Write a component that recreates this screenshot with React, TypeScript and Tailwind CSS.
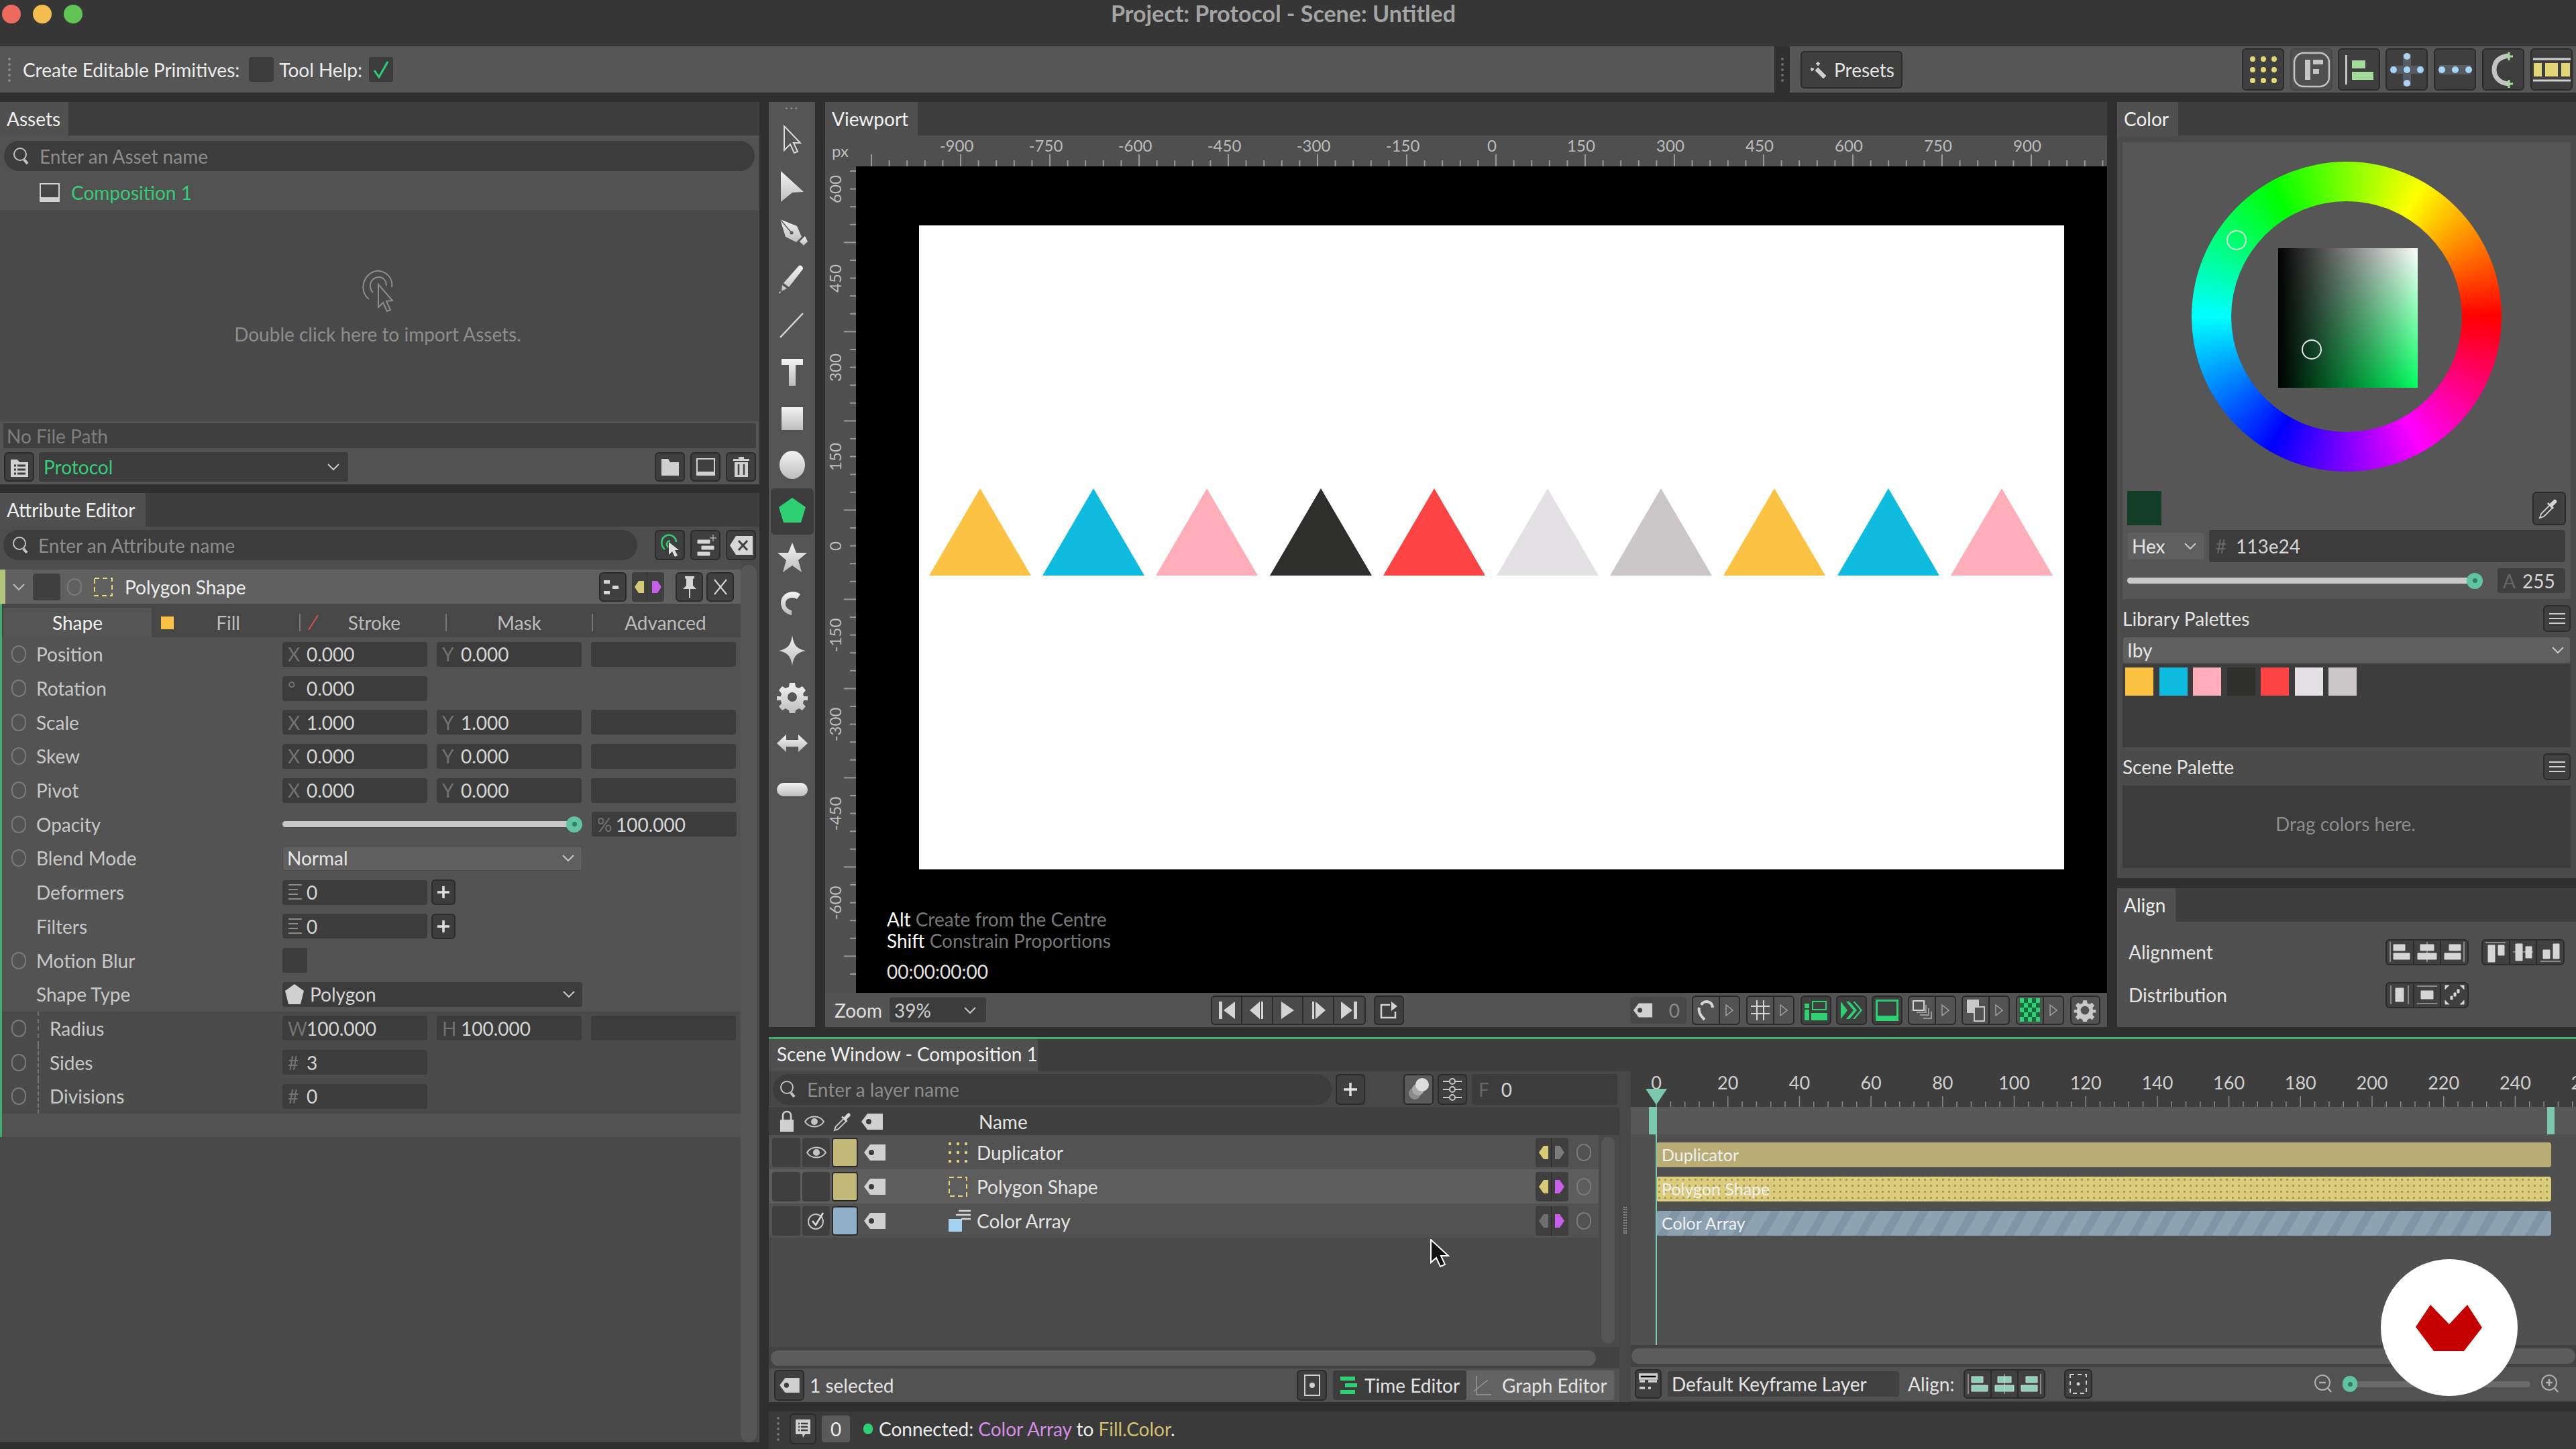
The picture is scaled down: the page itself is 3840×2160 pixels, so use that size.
import type { ReactNode } from 'react';

const G = '#2fcf74';

function Search() {
  return (
    <svg width="28" height="30" viewBox="0 0 28 30" className="shrink-0">
      <circle cx="12" cy="12" r="9" fill="none" stroke="#c4c4c4" strokeWidth="2" />
      <path d="M18 20l5 6" stroke="#c4c4c4" strokeWidth="4" />
    </svg>
  );
}

function Chevron({ c = '#c8c8c8' }: { c?: string }) {
  return (
    <svg width="20" height="12" viewBox="0 0 20 12" className="shrink-0">
      <path d="M2 2l8 8 8-8" fill="none" stroke={c} strokeWidth="2" />
    </svg>
  );
}

function Tag({ w = 34, h = 26 }: { w?: number; h?: number }) {
  return (
    <svg width={w} height={h} viewBox="0 0 34 26" className="shrink-0">
      <path d="M1 13L10 1h23v24H10z" fill="#d0d0d0" />
      <circle cx="12" cy="13" r="4" fill="#3c3c3c" />
    </svg>
  );
}

function Btn({ className = 'w-[45px] h-[45px]', children }: { className?: string; children?: ReactNode }) {
  return (
    <div className={`${className} flex items-center justify-center shrink-0 rounded-md border-2 border-[#2b2b2b] bg-[#3f3f3f]`}>
      {children}
    </div>
  );
}

function Radio() {
  return <div className="w-[22px] h-[26px] rounded-full border-2 border-[#7a7a7a] shrink-0" />;
}

function Field({ p, v, className = 'w-[216px]' }: { p?: ReactNode; v?: string; className?: string }) {
  return (
    <div className={`${className} h-[37px] shrink-0 rounded bg-[#3c3c3c] flex items-center pl-[8px] text-[#d6d6d6]`}>
      {p && <span className="w-[28px] shrink-0 text-[#727272]">{p}</span>}
      <span>{v}</span>
    </div>
  );
}

function ListGlyph() {
  return (
    <svg width="24" height="26" viewBox="0 0 24 26">
      <path d="M1 2h20M1 9h14M1 16h14M1 23h20" stroke="#8a8a8a" strokeWidth="2" />
    </svg>
  );
}

function Burger() {
  return (
    <svg width="26" height="20" viewBox="0 0 26 20">
      <path d="M1 3h24M1 10h24M1 17h24" stroke="#d0d0d0" strokeWidth="2" />
    </svg>
  );
}

function PanelTab({ children, className }: { children: ReactNode; className: string }) {
  return (
    <div className="h-[50px] shrink-0 bg-[#3e3e3e]">
      <div className={`${className} h-full flex items-center bg-[#505050] text-[#f0f0f0] pl-[10px]`}>{children}</div>
    </div>
  );
}

const ALIGN_PATHS = [
  'M3 2v30M8 6h17v9H8zM8 19h24v9H8z',
  'M17 2v30M7 6h20v9H7zM3 19h28v9H3z',
  'M31 2v30M9 6h17v9H9zM2 19h24v9H2z',
  'M2 3h30M6 7h10v25H6zM21 7h9v15h-9z',
  'M2 17h30M6 5h10v25H6zM21 9h9v17h-9z',
  'M2 31h30M6 14h10v13H6zM21 5h9v22h-9z',
  'M4 3v28M30 3v28M11 7h12v20H11z',
  'M2 4h30M2 30h30M8 11h18v12H8z',
  'M3 9V3h6M25 3h6v6M3 25v6h6M25 31h6v-6M11 19v5h3v-5zM16 14v5h3v-5zM21 9v5h3v-5z',
];

function AlignGroup({ kinds, className, accent = '#d6d6d6' }: { kinds: number[]; className: string; accent?: string }) {
  return (
    <div className={`${className} flex rounded-md border-2 border-[#2b2b2b] bg-[#2b2b2b] gap-[2px] shrink-0 overflow-hidden`}>
      {kinds.map((k) => (
        <div key={k} className="flex-1 bg-[#404040] flex items-center justify-center">
          <svg width="34" height="34" viewBox="0 0 34 34">
            <path d={ALIGN_PATHS[k]} fill={accent} stroke="#d6d6d6" strokeWidth="1" />
          </svg>
        </div>
      ))}
    </div>
  );
}

function ToolIcon({ i }: { i: number }) {
  const f = 'url(#tool)';
  const shapes: ReactNode[] = [
    <path d="M12 3v36l9-9 6 13 5-2-6-13h10z" fill="none" stroke="#d8d8d8" strokeWidth="2" />,
    <path d="M7 1l34 31-17 1L7 47z" fill={f} />,
    <g>
      <path d="M6 4l25 10 7 16-8 8-16-8z" fill={f} />
      <path d="M6 4l16 19" stroke="#555" strokeWidth="1.5" />
      <circle cx="23" cy="24" r="2.5" fill="#555" />
      <path d="M35 37l8-8 4 8-6 6z" fill={f} />
    </g>,
    <path d="M34 4c2-2 7 2 6 5L19 36l-8-6zM9 33l7 5-8 4zM4 44l2-2 1 2-2 2z" fill={f} />,
    <path d="M6 42L40 6" stroke="#d8d8d8" strokeWidth="2.5" />,
    <path d="M8 4h32v9H29v31H19V13H8z" fill={f} />,
    <rect x="8" y="7" width="32" height="34" fill={f} />,
    <ellipse cx="24" cy="24" rx="19" ry="21" fill={f} />,
    <path d="M24 4l20 14-7 23H11L4 18z" fill={G} />,
    <path d="M24 2l6 15h16l-13 11 5 18-14-10-14 10 5-18L2 17h16z" fill={f} />,
    <path d="M36 10C28 2 8 6 7 22c0 10 6 17 16 19l0-7c-6-2-10-6-9-12 1-7 12-9 17-5z" fill={f} />,
    <path d="M24 1c2 14 6 20 20 23-14 3-18 9-20 23-2-14-6-20-20-23 14-3 18-9 20-23z" fill={f} />,
    <path d="M20 3h8l1 6 5 2 5-3 5 6-4 5 1 4h6v6h-6l-1 5 4 4-5 6-5-3-5 3-1 5h-8l-1-5-5-3-5 3-5-6 4-4-1-5H1v-6h6l1-4-4-5 5-6 5 3 5-2zM24 17a7 7 0 100 14 7 7 0 000-14z" fill={f} fillRule="evenodd" />,
    <path d="M1 24l14-13v8h18v-8l14 13-14 13v-8H15v8z" fill={f} />,
    <rect x="1" y="14" width="46" height="20" rx="10" fill={f} />,
  ];
  return (
    <svg width="48" height="48" viewBox="0 0 48 48">
      {shapes[i]}
    </svg>
  );
}

function Ruler() {
  const labels = [-900, -750, -600, -450, -300, -150, 0, 150, 300, 450, 600, 750, 900];
  const ticks = Array.from({ length: 72 }, (_, k) => k);
  return (
    <svg width="1865" height="46" viewBox="0 0 1865 46" className="block shrink-0">
      {ticks.map((k) => {
        const x = 150 + k * 26.6 - 26.6 * 5 + 6;
        return <path key={k} d={`M${x} ${k % 5 === 0 ? 28 : 37}V46`} stroke="#999" strokeWidth="2" />;
      })}
      {labels.map((v, k) => (
        <text key={v} x={150 + k * 133} y="24" fontSize="24" fill="#bdbdbd" textAnchor="middle" fontFamily="Lato, sans-serif">
          {v}
        </text>
      ))}
    </svg>
  );
}

function VRuler() {
  const labels = [600, 450, 300, 150, 0, -150, -300, -450, -600];
  const ticks = Array.from({ length: 46 }, (_, k) => k);
  return (
    <svg width="46" height="1232" viewBox="0 0 46 1232" className="block shrink-0">
      {ticks.map((k) => (
        <path key={k} d={`M${k % 5 === 4 ? 28 : 37} ${7 + k * 26.6}H46`} stroke="#999" strokeWidth="2" />
      ))}
      {labels.map((v, k) => (
        <text
          key={v}
          transform={`translate(24 ${34 + k * 133}) rotate(-90)`}
          fontSize="24"
          fill="#bdbdbd"
          textAnchor="middle"
          fontFamily="Lato, sans-serif"
        >
          {v}
        </text>
      ))}
    </svg>
  );
}

function TimeRuler() {
  const ticks = Array.from({ length: 70 }, (_, k) => k);
  const labels = Array.from({ length: 14 }, (_, k) => k * 20);
  return (
    <svg width="1410" height="53" viewBox="0 0 1410 53" className="block">
      {ticks.map((k) => (
        <path key={k} d={`M${38 + k * 21.34} ${k % 5 === 0 ? 37 : 45}V53`} stroke="#8a8a8a" strokeWidth="1.5" />
      ))}
      {labels.map((v, k) => (
        <text key={v} x={38 + k * 106.7} y="27" fontSize="27" fill="#d0d0d0" textAnchor="middle" fontFamily="Lato, sans-serif">
          {v}
        </text>
      ))}
    </svg>
  );
}

function AttrRow({ label, radio = true, children }: { label: string; radio?: boolean; children?: ReactNode }) {
  return (
    <div className="h-[50.7px] flex items-center shrink-0">
      <div className="w-[14px] shrink-0" />
      <div className="w-[22px] shrink-0">{radio && <Radio />}</div>
      <div className="w-[382px] pl-[15px] shrink-0 text-[#c8c8c8]">{label}</div>
      <div className="flex items-center gap-[14px]">{children}</div>
    </div>
  );
}

function SubRow({ label, children }: { label: string; children?: ReactNode }) {
  return (
    <div className="h-[50.7px] flex items-center shrink-0">
      <div className="w-[14px] shrink-0" />
      <Radio />
      <div className="w-[382px] h-full shrink-0 ml-[17px] pl-[16px] border-l-2 border-dashed border-[#777] flex items-center text-[#c8c8c8]">
        {label}
      </div>
      <div className="-ml-[17px] flex items-center gap-[14px]">{children}</div>
    </div>
  );
}

function Slider({ className, knob }: { className: string; knob: string }) {
  return (
    <div className={`${className} h-[9px] rounded-full bg-[#c9c9c9] flex items-center justify-end`}>
      <div className={`${knob} rounded-full bg-[#62c3a3] flex items-center justify-center shrink-0`}>
        <div className="w-[7px] h-[7px] rounded-full bg-[#2f7f68]" />
      </div>
    </div>
  );
}

function Plus() {
  return (
    <Btn className="w-[36px] h-[38px] !bg-[#3c3c3c] ml-[-8px]">
      <svg width="20" height="20" viewBox="0 0 20 20">
        <path d="M10 1v18M1 10h18" stroke="#e0e0e0" strokeWidth="3.5" />
      </svg>
    </Btn>
  );
}

function LeftColumn() {
  return (
    <div className="w-[1132px] shrink-0 flex flex-col gap-[13px]">
      <div className="h-[570px] shrink-0 flex flex-col bg-[#494949]">
        <PanelTab className="w-[102px]">Assets</PanelTab>
        <div className="h-[56px] shrink-0 bg-[#525252] pt-[8px] pl-[6px] pr-[7px]">
          <div className="h-[45px] rounded-full bg-[#3c3c3c] flex items-center pl-[12px] gap-[13px] text-[#8d8d8d]">
            <Search />
            Enter an Asset name
          </div>
        </div>
        <div className="h-[55px] shrink-0 bg-[#525252] flex items-center pl-[58px] pt-[2px] gap-[16px] text-[#38cc7a]">
          <svg width="32" height="30" viewBox="0 0 32 30">
            <rect x="1" y="1" width="30" height="28" fill="#d0d0d0" />
            <rect x="3" y="3" width="26" height="19" fill="#454545" />
          </svg>
          Composition 1
        </div>
        <div className="flex-1 flex flex-col items-center justify-start pt-[89px] pr-[6px] text-[#8d8d8d]">
          <svg width="50" height="64" viewBox="0 0 50 64">
            <g fill="none" stroke="#8d8d8d" strokeWidth="2">
              <path d="M12 44C4 38 2 28 4 20 8 6 20 1 28 2c12 2 20 12 18 24" />
              <path d="M18 34c-6-6-6-18 4-22 8-3 16 2 16 12" />
              <path d="M26 22l0 34 7-7 6 13 5-2-6-13 9-1z" fill="#494949" />
            </g>
          </svg>
          <div className="mt-[18px]">Double click here to import Assets.</div>
        </div>
        <div className="shrink-0 h-[94px] bg-[#535353] px-[5px] pt-[3px]">
          <div className="h-[37px] bg-[#3f3f3f] flex items-center pl-[5px] text-[#7e7e7e]">No File Path</div>
          <div className="flex items-center mt-[6px] pl-[1px]">
            <Btn className="w-[45px] h-[44px]">
              <svg width="30" height="32" viewBox="0 0 30 32">
                <path d="M2 5h10l3 4h13v22H2z" fill="#d0d0d0" />
                <path d="M7 14h3M7 20h3M7 26h3M12 14h12M12 20h12M12 26h12" stroke="#3c3c3c" strokeWidth="3" />
              </svg>
            </Btn>
            <div className="ml-[7px] w-[461px] h-[44px] rounded bg-[#3c3c3c] flex items-center justify-between pl-[7px] pr-[12px] text-[#38cc7a]">
              Protocol
              <Chevron />
            </div>
            <div className="ml-auto flex gap-[8px]">
              <Btn className="w-[45px] h-[44px]">
                <svg width="30" height="30" viewBox="0 0 30 30">
                  <path d="M2 3h10l3 5h13v20H2z" fill="#d0d0d0" />
                </svg>
              </Btn>
              <Btn className="w-[45px] h-[44px]">
                <svg width="30" height="30" viewBox="0 0 30 30">
                  <rect x="1" y="2" width="28" height="26" fill="#d0d0d0" />
                  <rect x="3" y="4" width="24" height="18" fill="#3f3f3f" />
                </svg>
              </Btn>
              <Btn className="w-[45px] h-[44px]">
                <svg width="26" height="32" viewBox="0 0 26 32">
                  <path d="M9 1h8v3h8v3H1V4h8zM3 9h20v22H3z" fill="#d0d0d0" />
                  <path d="M9 12v16M17 12v16" stroke="#3f3f3f" strokeWidth="2.5" />
                </svg>
              </Btn>
            </div>
          </div>
        </div>
      </div>

      <div className="flex-1 flex flex-col bg-[#494949] min-h-0">
        <PanelTab className="w-[217px]">Attribute Editor</PanelTab>
        <div className="flex-1 flex min-h-0">
          <div className="w-[1104px] shrink-0 flex flex-col">
            <div className="h-[64px] shrink-0 flex items-start pt-[5px] pl-[5px] bg-[#4d4d4d]">
              <div className="w-[945px] h-[45px] shrink-0 rounded-full bg-[#3c3c3c] flex items-center pl-[12px] gap-[12px] text-[#8d8d8d]">
                <Search />
                Enter an Attribute name
              </div>
              <div className="ml-[26px] flex gap-[8px] shrink-0 z-10">
                <Btn>
                  <svg width="34" height="36" viewBox="0 0 34 36">
                    <path d="M9 24C2 18 3 6 12 3c8-2 14 4 14 10" fill="none" stroke={G} strokeWidth="2.5" />
                    <path d="M14 21c-3-3-3-9 3-10" fill="none" stroke={G} strokeWidth="2.5" />
                    <path d="M15 13v19l5-5 4 8 4-2-4-8h6z" fill="#e0e0e0" />
                  </svg>
                </Btn>
                <Btn>
                  <svg width="32" height="34" viewBox="0 0 32 34">
                    <path d="M4 9h18v5H4zM10 18h18v5H10zM4 27h18v5H4zM27 1v10M22 6h10" fill="#d6d6d6" stroke="#d6d6d6" strokeWidth="1" />
                  </svg>
                </Btn>
                <Btn>
                  <svg width="36" height="32" viewBox="0 0 36 32">
                    <path d="M1 16L10 2h25v28H10z" fill="#d6d6d6" />
                    <path d="M14 9l13 14M27 9L14 23" stroke="#3f3f3f" strokeWidth="3" />
                  </svg>
                </Btn>
              </div>
            </div>
            <div className="h-[51px] shrink-0 bg-[#606060] border-l-[8px] border-[#b4c47a] flex items-center text-[#ececec]">
              <div className="ml-[10px]">
                <Chevron c="#bdbdbd" />
              </div>
              <div className="ml-[11px] w-[41px] h-[40px] rounded bg-[#3f3f3f]" />
              <div className="ml-[10px]">
                <Radio />
              </div>
              <svg width="30" height="30" viewBox="0 0 30 30" className="ml-[17px]">
                <rect x="2" y="2" width="26" height="26" fill="none" stroke="#e4d678" strokeWidth="2" strokeDasharray="7 5" />
              </svg>
              <span className="ml-[17px]">Polygon Shape</span>
              <div className="ml-auto flex items-center mr-[10px]">
                <Btn className="w-[41px] h-[44px]">
                  <svg width="30" height="26" viewBox="0 0 30 26">
                    <path d="M1 3h9v5H1zM1 19h9v5H1zM14 11h9v5h-9zM10 13h4" fill="#d6d6d6" />
                  </svg>
                </Btn>
                <div className="ml-[8px] w-[48px] h-[44px] rounded bg-[#3f3f3f] flex items-center justify-center gap-[2px]">
                  <div className="w-[23px] h-full flex items-center justify-center border-r border-[#2b2b2b]">
                    <svg width="14" height="20" viewBox="0 0 14 20">
                      <path d="M14 1H6L0 10l6 9h8z" fill="#d6c978" />
                    </svg>
                  </div>
                  <div className="w-[23px] h-full flex items-center justify-center">
                    <svg width="14" height="20" viewBox="0 0 14 20">
                      <path d="M0 1h8l6 9-6 9H0z" fill="#c85fe8" />
                    </svg>
                  </div>
                </div>
                <Btn className="ml-[17px] w-[41px] h-[44px]">
                  <svg width="22" height="34" viewBox="0 0 22 34">
                    <path d="M4 1h14v3l-2 1v10l5 5H1l5-5V5L4 4zM10 20h2v13h-2z" fill="#d6d6d6" />
                  </svg>
                </Btn>
                <Btn className="ml-[5px] w-[41px] h-[44px]">
                  <svg width="22" height="26" viewBox="0 0 22 26">
                    <path d="M2 2l18 22M20 2L2 24" stroke="#d6d6d6" strokeWidth="2" />
                  </svg>
                </Btn>
              </div>
            </div>
            <div className="flex-1 bg-[#535353] border-l-[3px] border-[#3fae6c] flex flex-col max-h-[795px]">
              <div className="h-[50px] shrink-0 flex items-end bg-[#474747] pt-[6px] text-[#bdbdbd]">
                <div className="w-[221px] ml-[2px] h-[44px] bg-[#555555] flex items-center justify-center text-[#f0f0f0]">Shape</div>
                <div className="h-[44px] flex-1 flex items-center">
                  <div className="ml-[14px] w-[19px] h-[19px] bg-[#fcc244] shrink-0" />
                  <div className="w-[162px] mr-[25px] text-center">Fill</div>
                  <div className="w-[2px] h-[26px] bg-[#777] shrink-0" />
                  <svg width="20" height="26" viewBox="0 0 20 26" className="ml-[10px] shrink-0">
                    <path d="M2 24L16 2" stroke="#d85050" strokeWidth="2" />
                  </svg>
                  <div className="w-[160px] mr-[26px] text-center">Stroke</div>
                  <div className="w-[2px] h-[26px] bg-[#777] shrink-0" />
                  <div className="w-[216px] text-center">Mask</div>
                  <div className="w-[2px] h-[26px] bg-[#777] shrink-0" />
                  <div className="w-[216px] text-center">Advanced</div>
                </div>
              </div>
              <AttrRow label="Position">
                <Field p="X" v="0.000" />
                <Field p="Y" v="0.000" />
                <Field />
              </AttrRow>
              <AttrRow label="Rotation">
                <Field p="°" v="0.000" />
              </AttrRow>
              <AttrRow label="Scale">
                <Field p="X" v="1.000" />
                <Field p="Y" v="1.000" />
                <Field />
              </AttrRow>
              <AttrRow label="Skew">
                <Field p="X" v="0.000" />
                <Field p="Y" v="0.000" />
                <Field />
              </AttrRow>
              <AttrRow label="Pivot">
                <Field p="X" v="0.000" />
                <Field p="Y" v="0.000" />
                <Field />
              </AttrRow>
              <AttrRow label="Opacity">
                <Slider className="w-[447px]" knob="w-[24px] h-[24px]" />
                <Field p="%" v="100.000" />
              </AttrRow>
              <AttrRow label="Blend Mode">
                <div className="w-[447px] h-[37px] rounded bg-[#5f5f5f] border border-[#4a4a4a] flex items-center justify-between pl-[6px] pr-[10px] text-[#e6e6e6]">
                  Normal
                  <Chevron />
                </div>
              </AttrRow>
              <AttrRow label="Deformers" radio={false}>
                <Field p={<ListGlyph />} v="0" />
                <Plus />
              </AttrRow>
              <AttrRow label="Filters" radio={false}>
                <Field p={<ListGlyph />} v="0" />
                <Plus />
              </AttrRow>
              <AttrRow label="Motion Blur">
                <div className="w-[37px] h-[37px] rounded bg-[#3c3c3c]" />
              </AttrRow>
              <AttrRow label="Shape Type" radio={false}>
                <div className="w-[447px] h-[37px] rounded bg-[#3c3c3c] flex items-center pl-[3px] pr-[10px] text-[#d6d6d6]">
                  <svg width="30" height="32" viewBox="0 0 30 32">
                    <path d="M15 1l14 10-5 20H6L1 11z" fill="#d0d0d0" />
                  </svg>
                  <span className="ml-[8px]">Polygon</span>
                  <div className="ml-auto">
                    <Chevron />
                  </div>
                </div>
              </AttrRow>
              <div className="bg-[#4b4b4b] flex flex-col shrink-0">
                <SubRow label="Radius">
                  <Field p="W" v="100.000" />
                  <Field p="H" v="100.000" />
                  <Field />
                </SubRow>
                <SubRow label="Sides">
                  <Field p="#" v="3" />
                </SubRow>
                <SubRow label="Divisions">
                  <Field p="#" v="0" />
                </SubRow>
              </div>
            </div>
          </div>
          <div className="w-[24px] shrink-0 bg-[#565656] mt-[57px] rounded-full" />
        </div>
      </div>
    </div>
  );
}

function ToolColumn() {
  return (
    <div className="w-[69px] shrink-0 bg-[#555555] flex flex-col items-center">
      <div className="h-[22px] w-full shrink-0 text-center text-[#8a8a8a] leading-[14px] text-[20px] tracking-[2px]">···</div>
      {Array.from({ length: 15 }, (_, i) => (
        <div
          key={i}
          className={
            i === 8
              ? 'h-[69.2px] w-[64px] shrink-0 flex items-center justify-center rounded-md bg-[#3c3c3c]'
              : 'h-[69.2px] w-[64px] shrink-0 flex items-center justify-center'
          }
        >
          <ToolIcon i={i} />
        </div>
      ))}
    </div>
  );
}

const TRIANGLES = ['#fcc244', '#10bbe0', '#ffadb9', '#2e2e2c', '#fd4444', '#e3e1e3', '#cbc6c8', '#fcc244', '#10bbe0', '#ffadb9'];

function Triangle({ color }: { color: string }) {
  return (
    <svg width="152" height="130" viewBox="0 0 152 130" className="shrink-0">
      <path d="M76 0l76 130H0z" fill={color} />
    </svg>
  );
}

function ChevBtn({ children }: { children: ReactNode }) {
  return (
    <div className="w-[72px] h-[44px] rounded-md border-2 border-[#2b2b2b] bg-[#525252] flex items-center shrink-0">
      <div className="w-[40px] h-full flex items-center justify-center border-r-2 border-[#2b2b2b]">{children}</div>
      <svg width="12" height="18" viewBox="0 0 12 18" className="ml-[8px]">
        <path d="M1 1l10 8-10 8z" fill="none" stroke="#a0a0a0" strokeWidth="1.5" />
      </svg>
    </div>
  );
}

function Transport({ d }: { d: string }) {
  return (
    <div className="w-[46px] h-full flex items-center justify-center border-r-2 border-[#2b2b2b] last:border-r-0">
      <svg width="28" height="30" viewBox="0 0 28 30">
        <path d={d} fill="#d4d4d4" />
      </svg>
    </div>
  );
}

function Viewport() {
  return (
    <div className="w-[1911px] shrink-0 ml-[15px] flex flex-col bg-[#505050]">
      <PanelTab className="w-[138px]">Viewport</PanelTab>
      <div className="h-[46px] shrink-0 flex bg-[#4f4f4f]">
        <div className="w-[46px] pl-[10px] text-[24px] leading-[46px] text-[#bdbdbd]">px</div>
        <Ruler />
      </div>
      <div className="h-[1232px] shrink-0 flex">
        <VRuler />
        <div className="flex-1 bg-black pt-[88px] pl-[94px]">
          <div className="w-[1707px] h-[960px] bg-white flex items-start pt-[392px] pl-[15px] gap-[17.2px]">
            {TRIANGLES.map((c, i) => (
              <Triangle key={i} color={c} />
            ))}
          </div>
          <div className="mt-[58px] ml-[-48px] text-[28px] leading-[32px] text-[#777]">
            <div>
              <span className="text-white">Alt</span> Create from the Centre
            </div>
            <div>
              <span className="text-white">Shift</span> Constrain Proportions
            </div>
            <div className="mt-[14px] text-[#e4e4e4]">00:00:00:00</div>
          </div>
        </div>
      </div>
      <div className="flex-1 flex items-center bg-[#535353] text-[#e0e0e0]">
        <span className="ml-[14px]">Zoom</span>
        <div className="ml-[11px] w-[144px] h-[37px] rounded bg-[#3c3c3c] flex items-center justify-between pl-[7px] pr-[14px] text-[#cfcfcf]">
          39%
          <Chevron />
        </div>
        <div className="ml-[335px] w-[231px] h-[44px] rounded-md border-2 border-[#2b2b2b] bg-[#4a4a4a] flex items-center">
          <Transport d="M2 2h5v26H2zM26 2v26L9 15z" />
          <Transport d="M3 15L18 2v26zM20 2h3v26h-3z" />
          <Transport d="M5 2v26l19-13z" />
          <Transport d="M5 2h3v26H5zM10 2l15 13-15 13z" />
          <Transport d="M21 2h5v26h-5zM2 2v26l17-13z" />
        </div>
        <Btn className="ml-[12px] w-[45px] h-[44px]">
          <svg width="28" height="28" viewBox="0 0 28 28">
            <path d="M16 6H3v19h21v-9" fill="none" stroke="#d4d4d4" strokeWidth="2.5" />
            <path d="M18 1l9 7-9 7z" fill="#d4d4d4" />
          </svg>
        </Btn>
        <div className="ml-[337px] w-[84px] h-[40px] rounded-md bg-[#474747] flex items-center justify-between pl-[4px] pr-[10px] text-[#8a8a8a]">
          <Tag w={30} h={24} />0
        </div>
        <div className="ml-[8px]">
          <ChevBtn>
            <svg width="26" height="32" viewBox="0 0 26 32">
              <path d="M6 8C10 0 22 2 23 12M3 12c-2 8 4 14 8 18" fill="none" stroke="#d6d6d6" strokeWidth="4" />
            </svg>
          </ChevBtn>
        </div>
        <div className="ml-[9px]">
          <ChevBtn>
            <svg width="30" height="32" viewBox="0 0 30 32">
              <path d="M10 1v30M20 1v30M1 10h28M1 21h28" stroke="#d6d6d6" strokeWidth="2" />
            </svg>
          </ChevBtn>
        </div>
        <Btn className="ml-[9px] w-[46px] h-[44px]">
          <svg width="36" height="32" viewBox="0 0 36 32">
            <path d="M1 6h7v7H1zM1 15h7v16H1zM11 20h24v11H11z" fill={G} />
            <rect x="13" y="3" width="20" height="12" fill="none" stroke={G} strokeWidth="2" />
          </svg>
        </Btn>
        <Btn className="ml-[7px] w-[46px] h-[44px]">
          <svg width="34" height="30" viewBox="0 0 34 30">
            <path d="M1 2l10 13L1 28zM9 2l11 13L9 28h5l11-13L14 2zM19 2l11 13-11 13h3l11-13L22 2z" fill={G} />
          </svg>
        </Btn>
        <Btn className="ml-[7px] w-[46px] h-[44px]">
          <svg width="36" height="34" viewBox="0 0 36 34">
            <rect x="1" y="1" width="34" height="32" fill={G} />
            <rect x="4" y="4" width="28" height="21" fill="#3f3f3f" />
          </svg>
        </Btn>
        <div className="ml-[8px]">
          <ChevBtn>
            <svg width="30" height="32" viewBox="0 0 30 32">
              <rect x="2" y="2" width="16" height="14" fill="none" stroke="#d6d6d6" strokeWidth="2" />
              <path d="M21 8v11H7M25 13v10H12M29 18v10H17" fill="none" stroke="#999" strokeWidth="2" />
            </svg>
          </ChevBtn>
        </div>
        <div className="ml-[8px]">
          <ChevBtn>
            <svg width="30" height="34" viewBox="0 0 30 34">
              <rect x="2" y="1" width="18" height="20" fill="#c8c8c8" />
              <rect x="13" y="12" width="15" height="21" fill="#525252" stroke="#c8c8c8" strokeWidth="2" />
            </svg>
          </ChevBtn>
        </div>
        <div className="ml-[9px]">
          <ChevBtn>
            <svg width="30" height="35" viewBox="0 0 30 35">
              {Array.from({ length: 25 }, (_, k) => (
                <rect
                  key={k}
                  x={(k % 5) * 6}
                  y={Math.floor(k / 5) * 7}
                  width="6"
                  height="7"
                  fill={((k % 5) + Math.floor(k / 5)) % 2 === 0 ? G : '#1c6b3f'}
                />
              ))}
            </svg>
          </ChevBtn>
        </div>
        <Btn className="ml-[9px] w-[45px] h-[44px] !bg-[#525252]">
          <svg width="34" height="34" viewBox="0 0 48 48">
            <path d="M20 3h8l1 6 5 2 5-3 5 6-4 5 1 4h6v6h-6l-1 5 4 4-5 6-5-3-5 3-1 5h-8l-1-5-5-3-5 3-5-6 4-4-1-5H1v-6h6l1-4-4-5 5-6 5 3 5-2zM24 15a9 9 0 100 18 9 9 0 000-18z" fill="#c8c8c8" fillRule="evenodd" />
          </svg>
        </Btn>
      </div>
    </div>
  );
}

const PALETTE = ['#fcc244', '#10bbe0', '#ffadb9', '#2f2f2d', '#fd4444', '#e3e1e3', '#cbc6c8'];

function RightColumn() {
  return (
    <div className="flex-1 ml-[15px] flex flex-col min-w-0">
      <div className="h-[1157px] shrink-0 bg-[#4b4b4b] flex flex-col">
        <PanelTab className="w-[91px]">Color</PanelTab>
        <div className="mx-[8px] mt-[10px] h-[681px] shrink-0 bg-[#565656] pt-[29px] flex flex-col">
          <div className="relative w-[462px] h-[462px] mx-auto rounded-full bg-[conic-gradient(from_90deg,#f00,#f0f,#00f,#0ff,#0f0,#ff0,#f00)]">
            <div className="absolute left-[59px] top-[59px] w-[344px] h-[344px] rounded-full bg-[#565656]" />
            <div className="absolute left-[129px] top-[129px] w-[208px] h-[208px] bg-[linear-gradient(to_right,#000,transparent),linear-gradient(to_bottom,#fff,#00ff5f)]" />
            <div className="absolute left-[52px] top-[102px] w-[30px] h-[30px] rounded-full border-2 border-[#d6f5dd]" />
            <div className="absolute left-[164px] top-[265px] w-[30px] h-[30px] rounded-full border-2 border-[#e8e8e8]" />
          </div>
          <div className="mt-[29px] px-[7px] flex items-center justify-between">
            <div className="w-[51px] h-[51px] bg-[#113e24]" />
            <Btn className="w-[50px] h-[50px]">
              <svg width="32" height="32" viewBox="0 0 32 32">
                <path d="M2 30l2-6 13-13 4 4L8 28z" fill="none" stroke="#c8c8c8" strokeWidth="2" />
                <path d="M17 9l6-6c2-2 6 2 4 4l-6 6 2 2-2 2-8-8 2-2z" fill="#d6d6d6" />
              </svg>
            </Btn>
          </div>
          <div className="mt-[7px] px-[8px] flex items-center gap-[8px]">
            <div className="w-[113px] h-[40px] rounded bg-[#5f5f5f] flex items-center justify-between pl-[6px] pr-[10px] text-[#e6e6e6]">
              Hex
              <Chevron />
            </div>
            <div className="w-[532px] h-[48px] rounded bg-[#3c3c3c] flex items-center pl-[10px] text-[#d6d6d6] gap-[14px]">
              <span className="text-[#666]">#</span>113e24
            </div>
          </div>
          <div className="mt-[9px] px-[7px] flex items-center">
            <Slider className="w-[530px]" knob="w-[24px] h-[24px]" />
            <div className="ml-[22px] w-[101px] h-[37px] rounded bg-[#3f3f3f] flex items-center pl-[8px] gap-[10px] text-[#d6d6d6]">
              <span className="text-[#666]">A</span>255
            </div>
          </div>
        </div>
        <div className="mx-[8px] h-[57px] shrink-0 flex items-center justify-between text-[#e4e4e4]">
          Library Palettes
          <Btn className="w-[41px] h-[40px]">
            <Burger />
          </Btn>
        </div>
        <div className="mx-[9px] h-[38px] shrink-0 rounded bg-[#5f5f5f] flex items-center justify-between pl-[6px] pr-[8px] text-[#e6e6e6]">
          Iby
          <Chevron />
        </div>
        <div className="mx-[8px] mt-[2px] h-[124px] shrink-0 bg-[#3c3c3c] flex items-start gap-[8.5px] pt-[5px] pl-[4px]">
          {PALETTE.map((c) => (
            <div key={c} className="w-[42px] h-[42px] shrink-0" style={{ backgroundColor: c }} />
          ))}
        </div>
        <div className="mx-[8px] h-[57px] shrink-0 flex items-center justify-between text-[#e4e4e4]">
          Scene Palette
          <Btn className="w-[41px] h-[40px]">
            <Burger />
          </Btn>
        </div>
        <div className="mx-[8px] h-[123px] shrink-0 bg-[#3c3c3c] flex items-center justify-center pb-[10px] pr-[3px] text-[#8d8d8d]">Drag colors here.</div>
      </div>
      <div className="flex-1 mt-[15px] bg-[#505050] flex flex-col">
        <PanelTab className="w-[87px]">Align</PanelTab>
        <div className="flex-1 pl-[17px] text-[#e4e4e4]">
          <div className="h-[38px] mt-[26px] flex items-center">
            <span className="w-[383px]">Alignment</span>
            <AlignGroup kinds={[0, 1, 2]} className="h-[39px] w-[124px]" />
            <AlignGroup kinds={[3, 4, 5]} className="ml-[19px] h-[39px] w-[124px]" />
          </div>
          <div className="h-[38px] mt-[26px] flex items-center">
            <span className="w-[383px]">Distribution</span>
            <AlignGroup kinds={[6, 7, 8]} className="h-[39px] w-[124px]" />
          </div>
        </div>
      </div>
    </div>
  );
}

const LAYERS = [
  { name: 'Duplicator', color: '#c2b878', row: 'bg-[#525252]', eye: 'eye', l: '#d6c978', r: '#7a7a7a' },
  { name: 'Polygon Shape', color: '#c2b878', row: 'bg-[#5d5d5d]', eye: '', l: '#d6c978', r: '#c85fe8' },
  { name: 'Color Array', color: '#8fb0c8', row: 'bg-[#525252]', eye: 'check', l: '#6e6e6e', r: '#c85fe8' },
];

function Eye() {
  return (
    <svg width="30" height="24" viewBox="0 0 30 24">
      <path d="M1 12C7 2 23 2 29 12 23 22 7 22 1 12z" fill="none" stroke="#c4c4c4" strokeWidth="2" />
      <circle cx="15" cy="12" r="5" fill="#c4c4c4" />
    </svg>
  );
}

function LayerIcon({ i }: { i: number }) {
  if (i === 0)
    return (
      <svg width="30" height="32" viewBox="0 0 30 32">
        {[3, 15, 27].flatMap((x) =>
          [3, 16, 29].map((y) => <circle key={`${x}-${y}`} cx={x} cy={y} r="2.2" fill="#e4d678" />),
        )}
      </svg>
    );
  if (i === 1)
    return (
      <svg width="30" height="32" viewBox="0 0 30 32">
        <rect x="2" y="2" width="26" height="28" fill="none" stroke="#e4d678" strokeWidth="2" strokeDasharray="7 5" />
      </svg>
    );
  return (
    <svg width="34" height="34" viewBox="0 0 34 34">
      <path d="M1 14h11l9 0v19H1z" fill="#a6d0f0" />
      <path d="M16 2h18M12 8h22M20 14h14" stroke="#d6d6d6" strokeWidth="2.5" />
    </svg>
  );
}

function LayerRow({ i }: { i: number }) {
  const l = LAYERS[i];
  return (
    <div className={`${l.row} h-[51px] shrink-0 flex items-center pl-[5px] text-[#e4e4e4]`}>
      <div className="w-[42px] h-[44px] rounded bg-[#3f3f3f]" />
      <div className="ml-[3px] w-[41px] h-[44px] rounded bg-[#3f3f3f] flex items-center justify-center">
        {l.eye === 'eye' && <Eye />}
        {l.eye === 'check' && (
          <svg width="26" height="30" viewBox="0 0 26 30">
            <circle cx="12" cy="16" r="11" fill="none" stroke="#c4c4c4" strokeWidth="2" />
            <path d="M7 15l5 6L23 3" fill="none" stroke="#e0e0e0" strokeWidth="2.5" />
          </svg>
        )}
      </div>
      <div className="ml-[3px] w-[39px] h-[44px] rounded border-2 border-[#2b2b2b]" style={{ backgroundColor: l.color }} />
      <div className="ml-[8px]">
        <Tag />
      </div>
      <div className="ml-[92px] w-[43px] shrink-0">
        <LayerIcon i={i} />
      </div>
      <span>{l.name}</span>
      <div className="ml-auto w-[49px] h-[44px] rounded bg-[#3f3f3f] flex items-center">
        <div className="w-[24px] h-full flex items-center justify-center border-r border-[#2b2b2b]">
          <svg width="14" height="22" viewBox="0 0 14 22">
            <path d="M14 1H7L0 11l7 10h7z" fill={l.l} />
          </svg>
        </div>
        <div className="w-[24px] h-full flex items-center justify-center">
          <svg width="14" height="22" viewBox="0 0 14 22">
            <path d="M0 1h7l7 10-7 10H0z" fill={l.r} />
          </svg>
        </div>
      </div>
      <div className="ml-[12px] mr-[11px]">
        <Radio />
      </div>
    </div>
  );
}

function ScenePanel() {
  return (
    <div className="h-[541px] shrink-0 flex flex-col bg-[#3e3e3e] relative">
      <div className="h-[48px] shrink-0 flex">
        <div className="w-[401px] h-full flex items-center pl-[12px] pb-[5px] bg-[#505050] text-[#f0f0f0]">Scene Window - Composition 1</div>
      </div>
      <div className="flex-1 flex min-h-0">
        <div className="w-[1268px] shrink-0 flex flex-col bg-[#4a4a4a]">
          <div className="h-[54px] shrink-0 flex items-center pl-[6px] bg-[#474747]">
            <div className="w-[833px] h-[46px] shrink-0 rounded-full bg-[#3c3c3c] flex items-center pl-[9px] gap-[14px] text-[#8d8d8d]">
              <Search />
              Enter a layer name
            </div>
            <Btn className="ml-[6px] w-[44px] h-[46px]">
              <svg width="22" height="22" viewBox="0 0 22 22">
                <path d="M11 1v20M1 11h20" stroke="#e0e0e0" strokeWidth="3.5" />
              </svg>
            </Btn>
            <Btn className="ml-[57px] w-[45px] h-[46px] !bg-[#5a5a5a]">
              <svg width="32" height="36" viewBox="0 0 32 36">
                <circle cx="10" cy="24" r="9" fill="#8a8a8a" />
                <circle cx="15" cy="18" r="9" fill="#a8a8a8" />
                <circle cx="21" cy="11" r="10" fill="#dcdcdc" />
              </svg>
            </Btn>
            <Btn className="ml-[6px] w-[44px] h-[46px]">
              <svg width="30" height="34" viewBox="0 0 30 34">
                <path d="M1 5h28M1 17h28M1 29h28" stroke="#c8c8c8" strokeWidth="2" />
                <circle cx="15" cy="5" r="4" fill="#3f3f3f" stroke="#c8c8c8" strokeWidth="2" />
                <circle cx="15" cy="17" r="4" fill="#3f3f3f" stroke="#c8c8c8" strokeWidth="2" />
                <circle cx="15" cy="29" r="4" fill="#3f3f3f" stroke="#c8c8c8" strokeWidth="2" />
              </svg>
            </Btn>
            <div className="ml-[7px] w-[217px] h-[46px] rounded bg-[#3c3c3c] flex items-center pl-[10px] gap-[18px] text-[#d6d6d6]">
              <span className="text-[#666]">F</span>0
            </div>
          </div>
          <div className="h-[41px] shrink-0 flex items-center pl-[16px] bg-[#3f3f3f] text-[#e4e4e4]">
            <svg width="22" height="34" viewBox="0 0 22 34">
              <path d="M5 14V8c0-8 12-8 12 0v6" fill="none" stroke="#d0d0d0" strokeWidth="2.5" />
              <rect x="1" y="14" width="20" height="18" fill="#d0d0d0" />
            </svg>
            <div className="ml-[15px]">
              <Eye />
            </div>
            <svg width="30" height="34" viewBox="0 0 32 32" className="ml-[13px]">
              <path d="M2 30l2-6 13-13 4 4L8 28z" fill="none" stroke="#c8c8c8" strokeWidth="2" />
              <path d="M17 9l6-6c2-2 6 2 4 4l-6 6 2 2-2 2-8-8 2-2z" fill="#d6d6d6" />
            </svg>
            <div className="ml-[11px]">
              <Tag />
            </div>
            <span className="ml-[142px]">Name</span>
          </div>
          <div className="flex-1 flex min-h-0">
            <div className="w-[1237px] shrink-0 flex flex-col">
              <LayerRow i={0} />
              <LayerRow i={1} />
              <LayerRow i={2} />
            </div>
            <div className="ml-[4px] mt-[3px] mb-[5px] w-[20px] rounded-full bg-[#565656]" />
          </div>
          <div className="h-[32px] shrink-0 bg-[#424242] pt-[5px] pl-[3px]">
            <div className="w-[1230px] h-[23px] rounded-full bg-[#5c5c5c]" />
          </div>
          <div className="h-[50px] shrink-0 bg-[#525252] flex items-center pl-[8px] text-[#e4e4e4]">
            <Btn className="w-[45px] h-[46px]">
              <Tag w={32} h={24} />
            </Btn>
            <span className="ml-[8px]">1 selected</span>
            <Btn className="ml-auto w-[45px] h-[46px]">
              <svg width="26" height="34" viewBox="0 0 26 34">
                <rect x="2" y="2" width="22" height="30" fill="none" stroke="#d0d0d0" strokeWidth="2" />
                <circle cx="13" cy="17" r="4" fill="#d0d0d0" />
              </svg>
            </Btn>
            <div className="ml-[9px] mr-[8px] w-[419px] h-[44px] shrink-0 rounded flex items-center bg-[#636363]">
              <div className="w-[199px] h-full rounded flex items-center pl-[10px] gap-[9px] bg-[#3c3c3c]">
                <svg width="28" height="30" viewBox="0 0 28 30">
                  <path d="M1 2h22v6H1zM8 12h18v6H8zM1 22h22v6H1z" fill={G} />
                </svg>
                Time Editor
              </div>
              <div className="flex items-center pl-[10px] gap-[15px]">
                <svg width="28" height="32" viewBox="0 0 28 32">
                  <path d="M5 2v28h22M1 25L22 8" fill="none" stroke="#9a9a9a" strokeWidth="1.5" />
                </svg>
                Graph Editor
              </div>
            </div>
          </div>
        </div>
        <div className="w-[17px] shrink-0 bg-[#484848] flex items-center justify-center">
          <div className="w-[5px] h-[40px] mb-[50px] border-x-2 border-dotted border-[#8a8a8a]" />
        </div>
        <div className="flex-1 flex flex-col min-w-0 relative overflow-hidden">
          <div className="h-[53px] shrink-0">
            <TimeRuler />
          </div>
          <div className="h-[41px] shrink-0 bg-[#585858] flex justify-between pl-[27px] pr-[32px]">
            <div className="w-[11px] h-full bg-[#7cc8ae]" />
            <div className="w-[11px] h-full bg-[#7cc8ae]" />
          </div>
          <div className="h-[314px] shrink-0 bg-[#505050] pl-[38px] pr-[37px] pt-[12px] flex flex-col gap-[14px] text-[25px] text-[#f0f0f0]">
            <div className="h-[37px] rounded-sm bg-[#b8ae75] flex items-center pl-[8px]">Duplicator</div>
            <div className="h-[37px] rounded-sm bg-[#dccd7c] bg-[radial-gradient(#a89c58_1.6px,transparent_2px)] bg-[length:9px_9px] flex items-center pl-[8px]">
              Polygon Shape
            </div>
            <div className="h-[37px] rounded-sm bg-[repeating-linear-gradient(120deg,#8ea3b2_0px,#8ea3b2_20px,#7f96a6_20px,#7f96a6_32px)] flex items-center pl-[8px]">
              Color Array
            </div>
          </div>
          <div className="h-[33px] shrink-0 bg-[#424242] pt-[5px] pl-[1px]">
            <div className="w-[1407px] h-[23px] rounded-full bg-[#5c5c5c]" />
          </div>
          <div className="h-[50px] shrink-0 bg-[#525252] flex items-center pl-[6px] text-[#e4e4e4]">
            <Btn className="w-[40px] h-[44px]">
              <svg width="28" height="32" viewBox="0 0 28 32">
                <path d="M1 2h26v6H1zM1 12h8M14 12h13M1 22h8M14 22h4" stroke="#d0d0d0" strokeWidth="3.5" />
              </svg>
            </Btn>
            <div className="ml-[9px] w-[345px] h-[38px] rounded bg-[#414141] flex items-center pl-[6px]">Default Keyframe Layer</div>
            <span className="ml-[13px]">Align:</span>
            <AlignGroup kinds={[0, 1, 2]} className="ml-[14px] w-[122px] h-[44px]" accent="#8fd0bb" />
            <Btn className="ml-[28px] w-[42px] h-[44px]">
              <svg width="30" height="34" viewBox="0 0 30 34">
                <rect x="3" y="3" width="24" height="28" fill="none" stroke="#d0d0d0" strokeWidth="2" strokeDasharray="6 5" />
                <circle cx="15" cy="17" r="2.5" fill="#d0d0d0" />
              </svg>
            </Btn>
            <svg width="30" height="32" viewBox="0 0 30 32" className="ml-[329px]">
              <circle cx="14" cy="14" r="11" fill="none" stroke="#b0b0b0" strokeWidth="2" />
              <path d="M9 14h10M22 22l5 6" stroke="#b0b0b0" strokeWidth="2.5" />
            </svg>
            <div className="ml-[14px] w-[280px] h-[9px] rounded-full bg-[#6a6a6a] flex items-center">
              <div className="w-[22px] h-[24px] rounded-full bg-[#62c3a3] flex items-center justify-center">
                <div className="w-[7px] h-[7px] rounded-full bg-[#2f7f68]" />
              </div>
            </div>
            <svg width="30" height="32" viewBox="0 0 30 32" className="ml-[14px]">
              <circle cx="14" cy="14" r="11" fill="none" stroke="#b0b0b0" strokeWidth="2" />
              <path d="M9 14h10M14 9v10M22 22l5 6" stroke="#b0b0b0" strokeWidth="2.5" />
            </svg>
          </div>
          {/* playhead */}
          <div className="absolute left-[37px] top-[53px] w-[2px] h-[355px] bg-[#7cc8ae]" />
          <svg width="32" height="24" viewBox="0 0 32 24" className="absolute left-[22px] top-[26px]">
            <path d="M0 0h32L16 24z" fill="#7cc8ae" />
          </svg>
        </div>
      </div>
      {/* mouse pointer */}
      <svg width="30" height="42" viewBox="0 0 30 42" className="absolute left-[985px] top-[298px]">
        <path d="M2 1v34l8-7 6 13 7-3-6-13h11z" fill="#111" stroke="#fff" strokeWidth="2" />
      </svg>
    </div>
  );
}

function TopBar() {
  return (
    <div className="h-[69px] shrink-0 flex">
      <div className="w-[2645px] bg-[#565656] flex items-center text-[#ececec]">
        <div className="ml-[12px] w-[4px] h-[36px] border-l-4 border-dotted border-[#8a8a8a]" />
        <span className="ml-[18px]">Create Editable Primitives:</span>
        <div className="ml-[14px] w-[37px] h-[37px] rounded bg-[#3c3c3c]" />
        <span className="ml-[8px]">Tool Help:</span>
        <div className="ml-[10px] w-[36px] h-[37px] rounded bg-[#3c3c3c] flex items-center justify-center">
          <svg width="24" height="28" viewBox="0 0 24 28">
            <path d="M2 15l7 10L22 2" fill="none" stroke={G} strokeWidth="3" />
          </svg>
        </div>
      </div>
      <div className="w-[23px] flex items-center justify-center">
        <div className="w-[4px] h-[36px] border-l-4 border-dotted border-[#6e6e6e]" />
      </div>
      <div className="flex-1 bg-[#565656] flex items-center text-[#e4e4e4]">
        <Btn className="ml-[16px] w-[152px] h-[56px]">
          <div className="flex items-center gap-[12px]">
            <svg width="26" height="26" viewBox="0 0 26 26">
              <path d="M14 1v6M11 4h6M5 10v5M3 12h5M14 11l-3 3 11 11 3-3z" stroke="#d0d0d0" strokeWidth="2" fill="#d0d0d0" />
            </svg>
            Presets
          </div>
        </Btn>
        <Btn className="ml-[506px] w-[63px] h-[63px]">
          <svg width="44" height="44" viewBox="0 0 44 44">
            {[6, 22, 38].flatMap((x) =>
              [6, 22, 38].map((y) => <circle key={`${x}${y}`} cx={x} cy={y} r="4" fill="#e4d678" />),
            )}
          </svg>
        </Btn>
        <Btn className="ml-[9px] w-[63px] h-[63px] !bg-[#505050] !border-[#474747]">
          <svg width="56" height="54" viewBox="0 0 56 54">
            <rect x="2" y="2" width="52" height="50" rx="14" fill="none" stroke="#c4c4c4" strokeWidth="2.5" />
            <path d="M18 12h8v30h-8zM30 12h15v7H30zM30 26h9v7h-9z" fill="#c4c4c4" />
          </svg>
        </Btn>
        <Btn className="ml-[8px] w-[63px] h-[63px]">
          <svg width="46" height="48" viewBox="0 0 46 48">
            <rect x="2" y="2" width="3" height="44" fill="#c4c4c4" />
            <rect x="12" y="10" width="20" height="12" fill="#a3dc9a" />
            <rect x="12" y="27" width="32" height="12" fill="#a3dc9a" />
          </svg>
        </Btn>
        <Btn className="ml-[8px] w-[63px] h-[63px]">
          <svg width="54" height="56" viewBox="0 0 54 56">
            <path d="M21 4h12v18h18v12H33v18H21V34H3V22h18z" fill="#575c63" />
            <circle cx="27" cy="8" r="5" fill="#a8d4f8" />
            <circle cx="27" cy="28" r="5" fill="#a8d4f8" />
            <circle cx="27" cy="48" r="5" fill="#a8d4f8" />
            <circle cx="7" cy="28" r="5" fill="#a8d4f8" />
            <circle cx="47" cy="28" r="5" fill="#a8d4f8" />
          </svg>
        </Btn>
        <Btn className="ml-[9px] w-[63px] h-[63px]">
          <svg width="54" height="20" viewBox="0 0 54 20">
            <rect x="3" y="3" width="48" height="14" fill="#575c63" />
            <circle cx="7" cy="10" r="5" fill="#a8d4f8" />
            <circle cx="27" cy="10" r="5" fill="#a8d4f8" />
            <circle cx="47" cy="10" r="5" fill="#a8d4f8" />
          </svg>
        </Btn>
        <Btn className="ml-[9px] w-[63px] h-[63px]">
          <svg width="40" height="54" viewBox="0 0 40 54">
            <path d="M28 6C10 8 6 18 6 27s6 20 22 21" fill="none" stroke="#c4c4c4" strokeWidth="7" />
            <path d="M28 1v12M22 7h12M28 42v12M22 48h12" stroke="#a3dc9a" strokeWidth="3" />
          </svg>
        </Btn>
        <Btn className="ml-[9px] w-[63px] h-[63px]">
          <svg width="56" height="36" viewBox="0 0 56 36">
            <path d="M0 2h56M0 34h56" stroke="#d0d0d0" strokeWidth="3" />
            <path d="M1 8h12v20H1zM18 8h19v20H18zM42 8h13v20H42z" fill="#e4d678" />
          </svg>
        </Btn>
      </div>
    </div>
  );
}

export default function App() {
  return (
    <div className="relative w-[3840px] h-[2160px] overflow-hidden flex flex-col bg-[#2f2f2f] [font-family:Lato,sans-serif] text-[28px] leading-none text-[#d4d4d4]">
      <svg className="absolute w-0 h-0">
        <defs>
          <linearGradient id="tool" x1="0" y1="0" x2="0" y2="1">
            <stop offset="0" stopColor="#f4f4f4" />
            <stop offset="1" stopColor="#bdbdbd" />
          </linearGradient>
        </defs>
      </svg>
      <div className="h-[69px] shrink-0 bg-[#363636] flex items-center justify-center relative">
        <div className="absolute left-[3px] top-[7px] flex gap-[18px]">
          <div className="w-[28px] h-[28px] rounded-full bg-[#ee6a5f]" />
          <div className="w-[28px] h-[28px] rounded-full bg-[#f5bd4f]" />
          <div className="w-[28px] h-[28px] rounded-full bg-[#61c454]" />
        </div>
        <span className="mb-[30px] mr-[14px] text-[34px] font-bold text-[#a4a4a4]">Project: Protocol - Scene: Untitled</span>
      </div>
      <TopBar />
      <div className="flex-1 flex pt-[14px] gap-[14px] min-h-0">
        <div className="flex pb-[10px]">
          <LeftColumn />
        </div>
        <div className="flex-1 flex flex-col min-w-0">
          <div className="h-[1379px] shrink-0 flex">
            <ToolColumn />
            <Viewport />
            <RightColumn />
          </div>
          <div className="mt-[15px] h-[3px] shrink-0 bg-[#3fae6c]" />
          <ScenePanel />
          <div className="mt-[14px] flex-1 bg-[#3a3a3a] flex items-center text-[#ececec] pb-[4px]">
            <div className="ml-[12px] w-[4px] h-[36px] border-l-4 border-dotted border-[#6e6e6e]" />
            <Btn className="ml-[15px] w-[40px] h-[46px]">
              <svg width="24" height="30" viewBox="0 0 24 30">
                <path d="M1 1h22v22h-8l-3 5-1-5H1z" fill="#d0d0d0" />
                <path d="M5 7h2M5 12h2M5 17h2M9 7h10M9 12h10M9 17h10" stroke="#3f3f3f" strokeWidth="2.5" />
              </svg>
            </Btn>
            <div className="ml-[8px] w-[42px] h-[40px] rounded bg-[#5a5a5a] flex items-center justify-center">0</div>
            <div className="ml-[20px] w-[14px] h-[16px] rounded-full bg-[#2fcf74]" />
            <span className="ml-[9px]">
              Connected: <span className="text-[#d58fe6]">Color Array</span> to <span className="text-[#d4c070]">Fill.Color</span>.
            </span>
          </div>
        </div>
      </div>
      {/* watermark */}
      <div className="absolute left-[3549px] top-[1877px] w-[204px] h-[204px] rounded-full bg-white flex items-center justify-center">
        <svg width="100" height="70" viewBox="0 0 100 70">
          <path d="M22 1l28 29L77 1l22 34-27 35H27L0 34z" fill="#c40000" />
        </svg>
      </div>
    </div>
  );
}
